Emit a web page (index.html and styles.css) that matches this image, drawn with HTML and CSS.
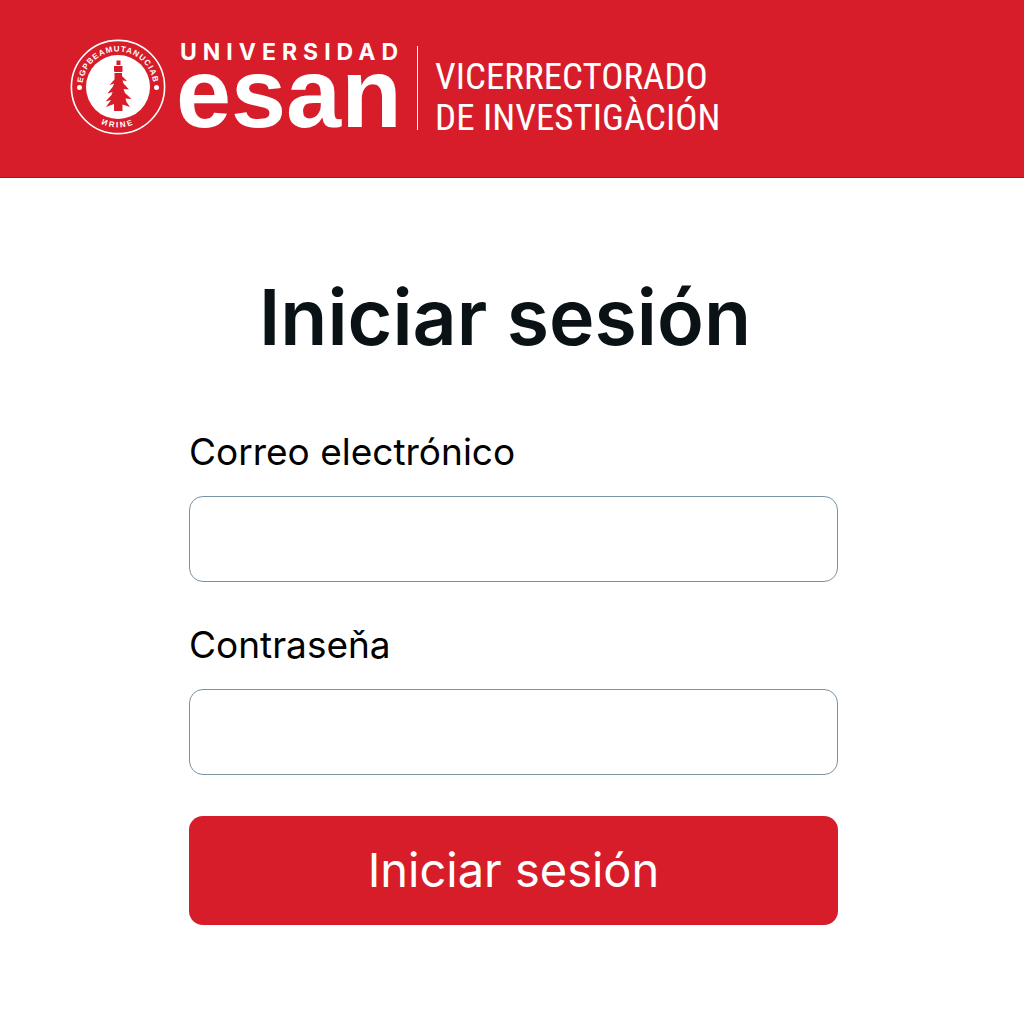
FILE: index.html
```html
<!DOCTYPE html>
<html lang="es">
<head>
<meta charset="utf-8">
<meta name="viewport" content="width=device-width, initial-scale=1">
<title>Iniciar sesión</title>
<link rel="stylesheet" href="styles.css">
</head>
<body>
<header class="header">
  <svg class="seal" viewBox="0 0 96 96" aria-hidden="true">
    <defs>
      <path id="arc-top" d="M12.500 48a35.500 35.500 0 0 1 71 0"/>
      <path id="arc-bottom" d="M7.500 48a40.500 40.500 0 0 0 81 0"/>
    </defs>
    <circle cx="48" cy="48" r="46.600" fill="none" stroke="#fff" stroke-width="1.600"/>
    <circle cx="48" cy="48" r="32" fill="#fff"/>
    <circle cx="9.500" cy="48.500" r="2.500" fill="#fff"/>
    <circle cx="86.500" cy="48.500" r="2.500" fill="#fff"/>
    <text class="seal-text"><textPath href="#arc-top" startOffset="50%">EGPBEAMUTANUCIAB</textPath></text>
    <text class="seal-text seal-text-wide"><textPath href="#arc-bottom" startOffset="50%">ИRINE</textPath></text>
    <path fill="#d71d2a" d="M46.500 21.500h4v4.500h2v6.500H52V37l5 5-4.500-.5 1 3 5.500 6-5.500-.5 1.500 4 6.500 6-6-.5 1 3.500 3.500 5-7.500-2.500V72h-8.500v-7L36 68l5-7-5.500 1.500 6-6.500 1-3-5 1.500 5.500-7 1-3-4.500 1.500 5-5.500v-8h-.5V26h2.500z"/>
    <path stroke="#fff" stroke-width="1" d="M43 26.500h10M43 33.500h10"/>
  </svg>
  <div class="brand">
    <span class="brand-top">UNIVERSIDAD</span>
    <span class="brand-name">esan</span>
  </div>
  <p class="department">VICERRECTORADO<br>DE INVESTIGÀCIÓN</p>
</header>
<main class="login">
  <h1 class="title">Iniciar sesión</h1>
  <form class="form">
    <label class="label" for="email">Correo electrónico</label>
    <input class="input" id="email" name="email" type="email">
    <label class="label" for="password">Contraseňa</label>
    <input class="input" id="password" name="password" type="password">
    <button class="submit" type="submit">Iniciar sesión</button>
  </form>
</main>
</body>
</html>
```
FILE: styles.css
```css
* {
  box-sizing: border-box;
}

body {
  margin: 0;
  background: #fff;
  color: #000;
  font-family: Inter, sans-serif;
}

.header {
  display: flex;
  align-items: flex-start;
  padding: 39px 70px 42px;
  border-bottom: 1px solid #cb0711;
  background: #d71d2a;
  color: #fff;
}

.seal {
  flex: none;
  width: 96px;
  height: 96px;
}

.seal-text {
  fill: #fff;
  font: 700 8px "Liberation Sans", sans-serif;
  letter-spacing: 1px;
  text-anchor: middle;
}

.seal-text-wide {
  letter-spacing: 2px;
}

.brand {
  display: flex;
  flex-direction: column;
  margin-left: 10px;
}

.brand-top {
  padding-left: 4px;
  font-size: 23px;
  font-weight: 700;
  line-height: 26px;
  letter-spacing: 6px;
}

.brand-name {
  font: 700 99px/56px "Liberation Sans", sans-serif;
}

.department {
  height: 84px;
  margin: 7px 0 0 13px;
  padding: 10px 0 0 17px;
  border-left: 1px solid #fff;
  font: 400 37px/41px "Roboto Condensed", Roboto, sans-serif;
}

.login {
  max-width: 698px;
  margin: 0 auto;
  padding: 89px 23px 89px 26px;
}

.title {
  margin: 0 0 63px;
  padding-right: 17px;
  font-size: 77px;
  font-weight: 600;
  line-height: 100px;
  text-align: center;
  color: #0a1216;
}

.form {
  display: flex;
  flex-direction: column;
}

.label {
  margin-bottom: 22px;
  font-size: 37px;
  line-height: 44px;
}

.input {
  width: 100%;
  height: 86px;
  margin: 0 0 41px;
  padding: 0 24px;
  border: 1px solid #7893a4;
  border-radius: 14px;
  background: #fff;
  font: inherit;
  font-size: 37px;
}

.submit {
  height: 109px;
  padding: 0 0 2px;
  border: 0;
  border-radius: 14px;
  background: #d71d2a;
  color: #fff;
  font: 400 47px/60px Inter, sans-serif;
}
```
